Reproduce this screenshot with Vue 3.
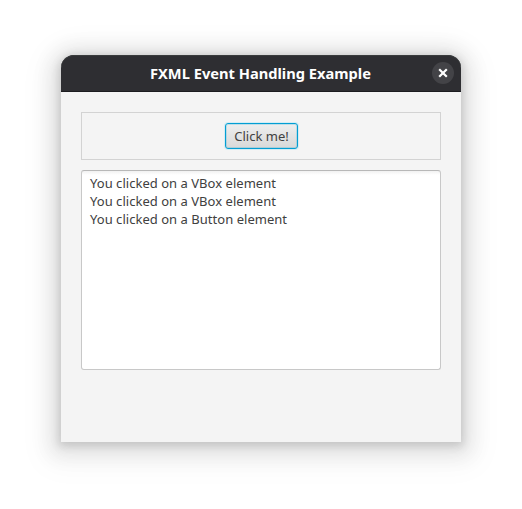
<script setup>
import { ref } from 'vue'

const title = 'FXML Event Handling Example'
const log = ref([
  'You clicked on a VBox element',
  'You clicked on a VBox element',
  'You clicked on a Button element',
])
</script>

<template>
  <div class="desktop">
    <section class="window">
      <header class="titlebar">
        <h1 class="title">{{ title }}</h1>
        <button class="close" aria-label="Close">
          <svg width="10" height="10" viewBox="0 0 10 10">
            <path d="M1.2 1.2 L8.8 8.8 M8.8 1.2 L1.2 8.8" fill="none" stroke="#fff" stroke-width="2.2" />
          </svg>
        </button>
      </header>
      <main class="content">
        <div class="vbox">
          <button class="action">Click me!</button>
        </div>
        <div class="log">
          <p v-for="(line, i) in log" :key="i" class="line">{{ line }}</p>
        </div>
      </main>
    </section>
  </div>
</template>

<style>
body {
  background: #fff;
}
</style>

<style scoped>
.desktop {
  box-sizing: border-box;
  width: 522px;
  height: 509px;
  padding: 55px 61px 67px;
  overflow: hidden;
  font-family: "Noto Sans", sans-serif;
}
.window {
  display: flex;
  flex-direction: column;
  width: 400px;
  height: 387px;
  background: #f4f4f4;
  border-radius: 14px 14px 0 0;
  box-shadow:
    0 2px 8px 2px rgba(0, 0, 0, 0.13),
    0 3px 20px 10px rgba(0, 0, 0, 0.09),
    0 6px 32px 16px rgba(0, 0, 0, 0.04);
}
.titlebar {
  box-sizing: border-box;
  display: grid;
  grid-template-columns: 22px 1fr 22px;
  align-items: center;
  height: 37px;
  padding: 0 7px 1px;
  background: #2e2e32;
  border-radius: 13px 13px 0 0;
  box-shadow: inset 0 -1px 0 #1c1c20, inset 0 1px 0 #3a3c3d;
}
.title {
  grid-column: 2;
  margin: 0 1px 0 0;
  color: #fff;
  font-size: 14.667px;
  font-weight: 700;
  line-height: 20px;
  text-align: center;
  white-space: nowrap;
}
.close {
  display: flex;
  align-items: center;
  justify-content: center;
  width: 22px;
  height: 22px;
  padding: 0;
  border: 0;
  border-radius: 50%;
  background: #434347;
}
.content {
  display: flex;
  flex-direction: column;
  gap: 10px;
  padding: 20px;
}
.vbox {
  box-sizing: border-box;
  display: flex;
  align-items: center;
  justify-content: center;
  height: 48px;
  padding-left: 1px;
  border: 1px solid #d3d3d3;
}
.action {
  box-sizing: border-box;
  width: 73px;
  height: 26px;
  padding: 0;
  border: 1px solid #039ed3;
  border-radius: 3px;
  background: linear-gradient(#eeeeee, #d9d9d9);
  box-shadow: 0 0 0 1px #d3edf5, inset 0 0 0 1px rgba(3, 158, 211, 0.2);
  color: #404040;
  font-family: inherit;
  font-size: 13px;
  line-height: 24px;
}
.log {
  box-sizing: border-box;
  height: 200px;
  padding: 3px 8px;
  border: 1px solid #c8c8c8;
  border-top-color: #b8b8b8;
  border-radius: 3px;
  background: linear-gradient(#f1f1f1, #fff 4px);
}
.line {
  margin: 0;
  color: #404040;
  font-size: 13px;
  letter-spacing: 0.03px;
  line-height: 18px;
}
</style>
